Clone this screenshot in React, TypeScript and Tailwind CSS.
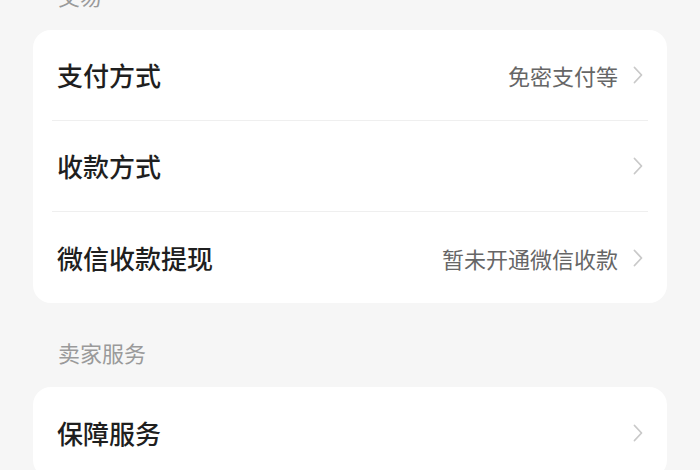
const cn = { fontFamily: '"Noto Sans CJK SC", "Noto Sans", sans-serif' };

type Item = { label: string; value?: string };

const groups: { title: string; items: Item[] }[] = [
  {
    title: "交易",
    items: [
      { label: "支付方式", value: "免密支付等" },
      { label: "收款方式" },
      { label: "微信收款提现", value: "暂未开通微信收款" },
    ],
  },
  {
    title: "卖家服务",
    items: [{ label: "保障服务" }],
  },
];

function Chevron() {
  return (
    <svg width="10" height="18" viewBox="0 0 10 18" className="shrink-0" aria-hidden="true">
      <polyline points="1.5,1.5 8.5,9 1.5,16.5" fill="none" stroke="#c9c9c9" strokeWidth="1.8" strokeLinecap="round" strokeLinejoin="round" />
    </svg>
  );
}

function Row({ item, last }: { item: Item; last: boolean }) {
  return (
    <div className={`mx-[19px] flex h-[91px] items-center pl-[5px] pr-[5px] ${last ? "" : "border-b border-[#efefef]"}`}>
      <span className="flex-1 text-[26px] font-medium leading-none text-[#1f1f1f]">{item.label}</span>
      {item.value && <span className="mr-[15px] text-[22px] leading-none text-[#666666]">{item.value}</span>}
      <Chevron />
    </div>
  );
}

export default function App() {
  return (
    <div className="h-[470px] w-[700px] overflow-hidden bg-[#f6f6f6]" style={cn}>
      <div className="mt-[-54px] px-[33px]">
        {groups.map(g => (
          <div key={g.title}>
            <div className="pl-[25px] pt-[38px] pb-[24px] text-[22px] leading-[22px] text-[#9a9a9a]">{g.title}</div>
            <div className="rounded-[18px] bg-white">
              {g.items.map((it, i) => (
                <Row key={it.label} item={it} last={i === g.items.length - 1} />
              ))}
            </div>
          </div>
        ))}
      </div>
    </div>
  );
}
